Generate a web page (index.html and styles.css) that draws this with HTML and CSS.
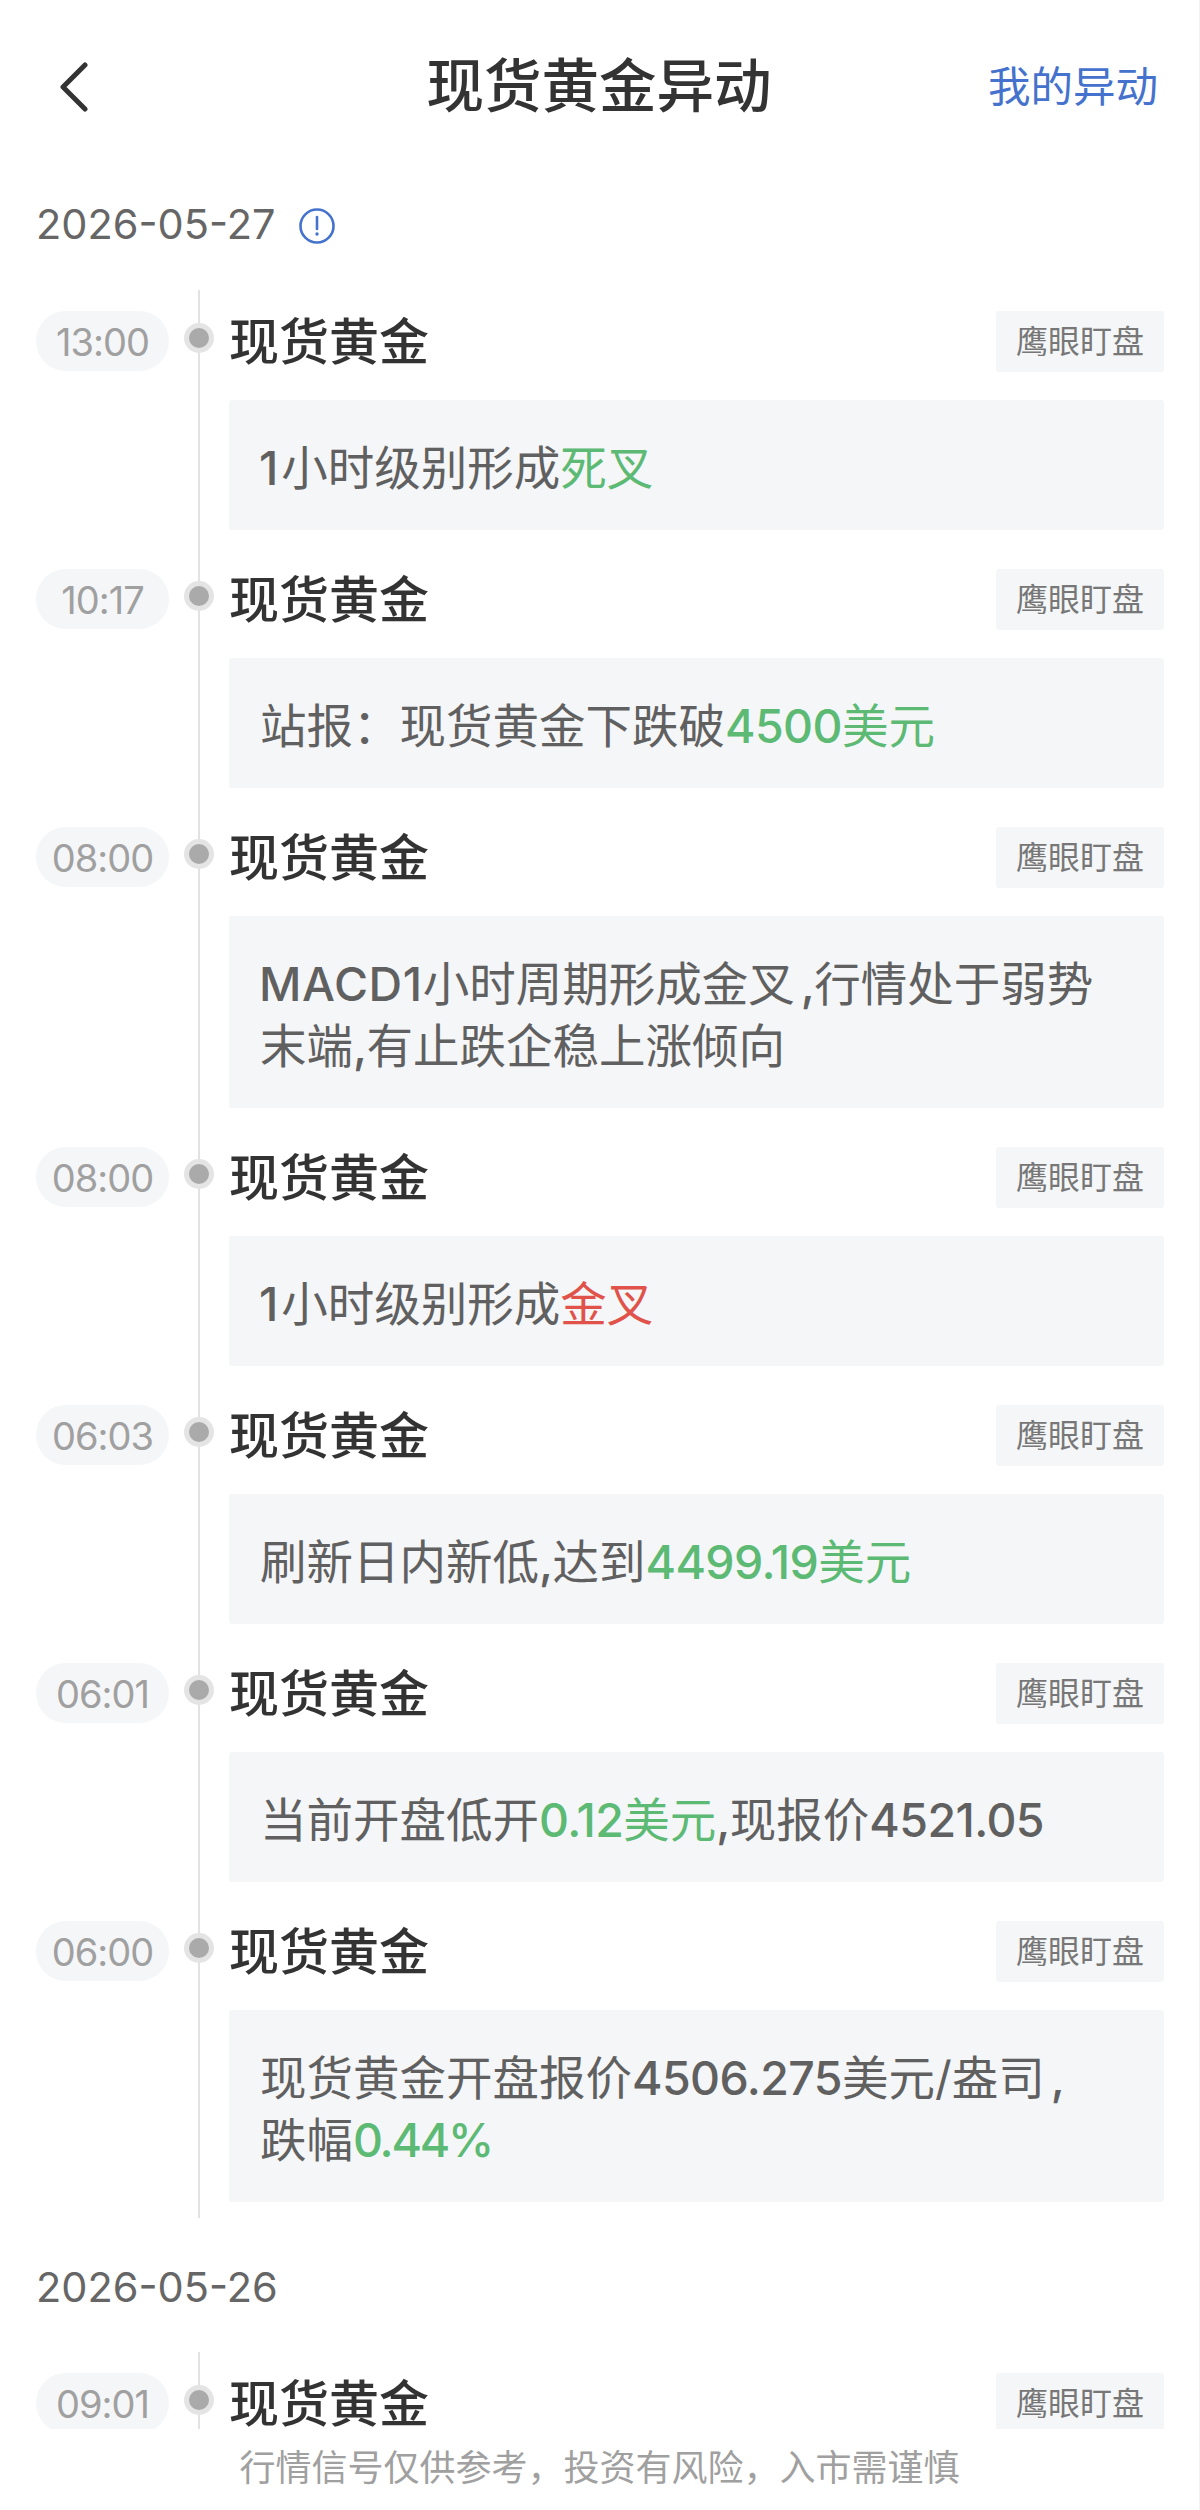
FILE: index.html
```html
<!DOCTYPE html>
<html lang="zh-CN">
<head>
    <meta charset="UTF-8">
    <meta name="viewport" content="width=device-width, initial-scale=1.0">
    <title>现货黄金异动</title>
    <link rel="stylesheet" href="styles.css">
</head>
<body>

    <header class="nav-bar">
        <svg class="back-icon" width="28" height="50" viewBox="0 0 28 50">
            <path d="M25 3 L3 25 L25 47" fill="none" stroke="#333" stroke-width="5" stroke-linecap="round" stroke-linejoin="round"/>
        </svg>
        <h1 class="nav-title">现货黄金异动</h1>
        <a class="nav-link">我的异动</a>
    </header>

    <div class="feed">
        <div class="date-row">
            <span>2026-05-27</span>
            <svg class="info-icon" width="36" height="36" viewBox="0 0 36 36">
                <circle cx="18" cy="18" r="16.5" fill="none" stroke="#4472cc" stroke-width="2.6"/>
                <path d="M18 9 V21" fill="none" stroke="#4472cc" stroke-width="2.6" stroke-linecap="round"/>
                <circle cx="18" cy="26" r="1.7" fill="#4472cc"/>
            </svg>
        </div>

        <div class="day">
            <div class="event">
                <span class="time">13:00</span>
                <span class="dot"></span>
                <div class="event-body">
                    <div class="event-head"><span class="event-name">现货黄金</span><span class="tag">鹰眼盯盘</span></div>
                    <div class="event-text"><span class="num one">1</span>小时级别形成<span class="down">死叉</span></div>
                </div>
            </div>
            <div class="event">
                <span class="time">10:17</span>
                <span class="dot"></span>
                <div class="event-body">
                    <div class="event-head"><span class="event-name">现货黄金</span><span class="tag">鹰眼盯盘</span></div>
                    <div class="event-text">站报：现货黄金下跌破<span class="down"><span class="num">4500</span>美元</span></div>
                </div>
            </div>
            <div class="event">
                <span class="time">08:00</span>
                <span class="dot"></span>
                <div class="event-body">
                    <div class="event-head"><span class="event-name">现货黄金</span><span class="tag">鹰眼盯盘</span></div>
                    <div class="event-text"><span class="num wide">MACD1</span>小时周期形成金叉<span class="num comma-gap">,</span>行情处于弱势<br>末端<span class="num">,</span>有止跌企稳上涨倾向</div>
                </div>
            </div>
            <div class="event">
                <span class="time">08:00</span>
                <span class="dot"></span>
                <div class="event-body">
                    <div class="event-head"><span class="event-name">现货黄金</span><span class="tag">鹰眼盯盘</span></div>
                    <div class="event-text"><span class="num one">1</span>小时级别形成<span class="up">金叉</span></div>
                </div>
            </div>
            <div class="event">
                <span class="time">06:03</span>
                <span class="dot"></span>
                <div class="event-body">
                    <div class="event-head"><span class="event-name">现货黄金</span><span class="tag">鹰眼盯盘</span></div>
                    <div class="event-text">刷新日内新低<span class="num">,</span>达到<span class="down"><span class="num">4499.19</span>美元</span></div>
                </div>
            </div>
            <div class="event">
                <span class="time">06:01</span>
                <span class="dot"></span>
                <div class="event-body">
                    <div class="event-head"><span class="event-name">现货黄金</span><span class="tag">鹰眼盯盘</span></div>
                    <div class="event-text">当前开盘低开<span class="down"><span class="num">0.12</span>美元</span><span class="num">,</span>现报价<span class="num">4521.05</span></div>
                </div>
            </div>
            <div class="event">
                <span class="time">06:00</span>
                <span class="dot"></span>
                <div class="event-body">
                    <div class="event-head"><span class="event-name">现货黄金</span><span class="tag">鹰眼盯盘</span></div>
                    <div class="event-text">现货黄金开盘报价<span class="num">4506.275</span>美元/盎司<span class="num comma-gap">,</span><br>跌幅<span class="down"><span class="num tight">0.44%</span></span></div>
                </div>
            </div>
        </div>

        <div class="date-row">
            <span>2026-05-26</span>
        </div>

        <div class="day">
            <div class="event">
                <span class="time">09:01</span>
                <span class="dot"></span>
                <div class="event-body">
                    <div class="event-head"><span class="event-name">现货黄金</span><span class="tag">鹰眼盯盘</span></div>
                </div>
            </div>
        </div>
    </div>

    <footer class="disclaimer">行情信号仅供参考，投资有风险，入市需谨慎</footer>

</body>
</html>
```

FILE: styles.css
```css
body {
    font-family: Inter, "Noto Sans CJK SC", sans-serif;
    margin: 0;
    padding: 0;
    height: 2510px;
    box-sizing: border-box;
    border-right: 1px solid #f2f2f4;
    background-color: white;
    display: flex;
    flex-direction: column;
    overflow: hidden;
}
.nav-bar {
    height: 174px;
    margin-bottom: 25px;
    flex-shrink: 0;
    display: grid;
    grid-template-columns: 1fr auto 1fr;
    align-items: center;
    padding: 0 41px 0 40px;
}
.back-icon {
    width: 28px;
    margin-left: 20px;
}
.nav-title {
    margin: 0;
    font-size: 57.5px;
    font-weight: 500;
    color: #333;
    line-height: 1;
}
.nav-link {
    justify-self: end;
    font-size: 42.5px;
    color: #4472cc;
    line-height: 1;
}
.feed {
    flex-grow: 1;
    min-height: 0;
    overflow: hidden;
    padding: 0 35px 0 36px;
}
.date-row {
    height: 50px;
    display: flex;
    align-items: center;
    gap: 23px;
    font-size: 41.5px;
    color: #666;
}
.info-icon {
    margin-top: 4px;
}
.day {
    position: relative;
    margin-top: 41px;
    margin-bottom: 44px;
    padding-top: 21px;
    padding-bottom: 16px;
}
.day:last-child {
    margin-top: 40px;
    margin-bottom: 0;
}
.day::before {
    content: "";
    position: absolute;
    left: 162px;
    top: 0;
    bottom: 0;
    width: 2px;
    background-color: #e2e2e2;
}
.event {
    display: flex;
    align-items: flex-start;
    margin-bottom: 39px;
}
.event:last-child {
    margin-bottom: 0;
}
.time {
    width: 133px;
    height: 60px;
    flex-shrink: 0;
    border-radius: 30px;
    background-color: #f5f6f8;
    color: #a0a0a0;
    font-size: 38px;
    letter-spacing: -1px;
    line-height: 62px;
    text-align: center;
}
.dot {
    width: 20px;
    height: 20px;
    flex-shrink: 0;
    margin: 12px 0 0 15px;
    border: 5px solid #e4e4e4;
    border-radius: 50%;
    background-color: #aaa;
    position: relative;
}
.event-body {
    flex-grow: 1;
    margin-left: 15px;
}
.event-head {
    height: 61px;
    display: flex;
    align-items: center;
    justify-content: space-between;
}
.event-name {
    font-size: 50px;
    font-weight: 500;
    color: #333;
    line-height: 50px;
}
.tag {
    width: 168px;
    height: 61px;
    border-radius: 3px;
    background-color: #f5f6f8;
    color: #777;
    font-size: 32px;
    line-height: 61px;
    text-align: center;
}
.event-text {
    margin-top: 28px;
    padding: 37px 31px 31px;
    border-radius: 3px;
    background-color: #f5f6f8;
    color: #606060;
    font-size: 46.5px;
    line-height: 62px;
}
.num {
    font-weight: 500;
    letter-spacing: -0.6px;
}
.one {
    margin-left: -1px;
    letter-spacing: 3px;
}
.wide {
    margin-left: -1px;
    letter-spacing: 0.6px;
}
.tight {
    letter-spacing: -2.2px;
}
.comma-gap {
    margin-left: 6px;
}
.down {
    color: #5cba74;
}
.up {
    color: #e0524a;
}
.disclaimer {
    height: 81px;
    flex-shrink: 0;
    background-color: white;
    color: #a0a0a0;
    font-size: 36px;
    line-height: 78px;
    text-align: center;
}
```
